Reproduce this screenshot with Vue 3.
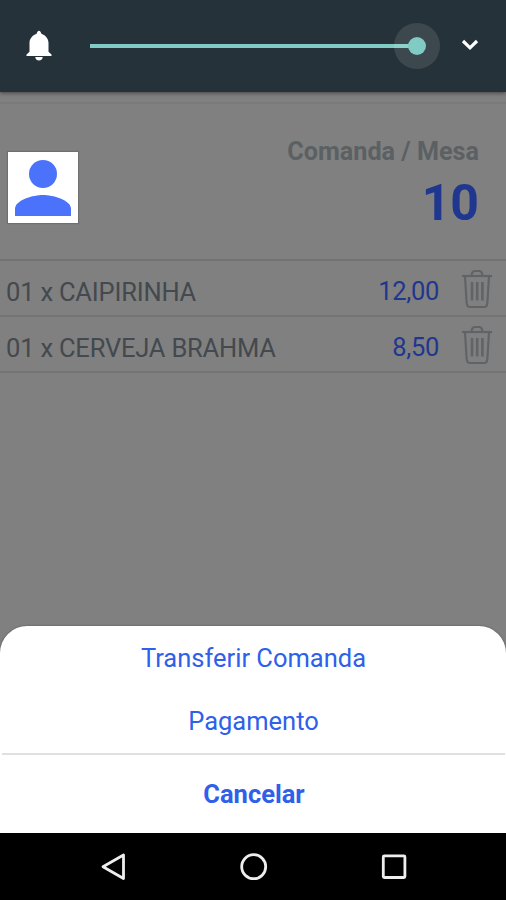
<script setup>
import { ref } from 'vue'

const volume = ref(100)
const comanda = ref('10')

const items = ref([
  { id: 1, qty: '01', name: 'CAIPIRINHA', price: '12,00' },
  { id: 2, qty: '01', name: 'CERVEJA BRAHMA', price: '8,50' }
])

const showSheet = ref(true)
const actions = ['Transferir Comanda', 'Pagamento']

const removeItem = (item) => {
  items.value = items.value.filter(i => i.id !== item.id)
}
</script>

<template>
  <div class="screen">
    <!-- Volume -->
    <div class="volume-panel">
      <svg class="bell" width="28" height="32" viewBox="0 0 28 32">
        <path d="M14 .8c1 0 1.800 1.300 2.400 3C20.800 5.300 23.500 9 23.500 13v8.800l3 2.700V26h-25v-1.500l3-2.700V13c0-4 2.700-7.700 7.100-9.200.6-1.700 1.400-3 2.400-3z" fill="#fff" />
        <path d="M10.300 27h7.400c0 2-1.600 3.500-3.700 3.500s-3.700-1.500-3.700-3.500z" fill="#fff" />
      </svg>
      <div class="slider">
        <div class="track" :style="{ width: volume + '%' }"></div>
        <div class="thumb"></div>
      </div>
      <svg class="chevron" width="18" height="12" viewBox="0 0 18 12">
        <path d="M2 2l7 6.800L16 2" fill="none" stroke="#fff" stroke-width="3.200" />
      </svg>
    </div>

    <!-- Comanda -->
    <div class="content">
      <div class="comanda-header">
        <div class="avatar">
          <svg width="56" height="56" viewBox="0 0 56 56" fill="#4a72fa">
            <circle cx="28" cy="14" r="14" />
            <path d="M0 56v-7c0-9.300 18.600-14 28-14s28 4.700 28 14v7z" />
          </svg>
        </div>
        <div class="comanda-info">
          <div class="label">Comanda / Mesa</div>
          <div class="number">{{ comanda }}</div>
        </div>
      </div>

      <div v-for="item in items" :key="item.id" class="item">
        <div class="name">{{ item.qty }} x {{ item.name }}</div>
        <div class="price">{{ item.price }}</div>
        <button class="trash-btn" @click="removeItem(item)">
          <svg width="32" height="40" viewBox="0 0 32 40" fill="none" stroke="#606467" stroke-width="2.200">
            <path d="M1 7h30" />
            <path d="M10.500 6.500c.3-3 1.500-4.500 3.500-4.500h4c2 0 3.200 1.500 3.500 4.500" />
            <path d="M4 7.500l1.700 27c.2 2.200 1.300 3.500 3.300 3.500h14c2 0 3.100-1.300 3.300-3.500L28 7.500" />
            <path d="M11 13v18.500M16.200 13v18.500M21.400 13v18.500" stroke-width="2.600" />
          </svg>
        </button>
      </div>
    </div>

    <!-- Menu -->
    <div v-if="showSheet" class="sheet">
      <button v-for="action in actions" :key="action" class="sheet-btn" :class="{ first: action === actions[0] }">{{ action }}</button>
      <button class="sheet-btn cancel" @click="showSheet = false">Cancelar</button>
    </div>

    <div class="nav-bar">
      <svg width="28" height="30" viewBox="0 0 28 30">
        <path d="M24.500 3v23.500L4 14.700z" fill="none" stroke="#eee" stroke-width="2.800" stroke-linejoin="round" />
      </svg>
      <svg width="28" height="30" viewBox="0 0 28 30">
        <circle cx="13.700" cy="14.700" r="12" fill="none" stroke="#eee" stroke-width="2.800" />
      </svg>
      <svg width="28" height="30" viewBox="0 0 28 30">
        <rect x="3.300" y="3.900" width="21.600" height="21.600" rx="1" fill="none" stroke="#eee" stroke-width="2.800" />
      </svg>
    </div>
  </div>
</template>

<style>
body {
  margin: 0;
  background: #808080;
}
</style>

<style scoped>
.screen {
  display: flex;
  flex-direction: column;
  width: 506px;
  height: 900px;
  overflow: hidden;
  background: #808080;
  font-family: Roboto, "Liberation Sans", sans-serif;
}

button {
  padding: 0;
  border: none;
  background: none;
  font-family: inherit;
  cursor: pointer;
}

/* Volume */
.volume-panel {
  display: flex;
  align-items: center;
  box-sizing: border-box;
  flex: none;
  height: 92px;
  padding: 0 27px 1px 25px;
  background: #263239;
  box-shadow: 0 1px 4px rgba(0, 0, 0, 0.5);
}

.slider {
  position: relative;
  width: 327px;
  margin-left: 37px;
}

.track {
  height: 4px;
  background: #80cbc4;
}

.thumb {
  position: absolute;
  right: -23px;
  top: -21px;
  box-sizing: border-box;
  width: 46px;
  height: 46px;
  border: 14px solid rgba(255, 255, 255, 0.11);
  border-radius: 50%;
  background: #80cbc4;
  background-clip: padding-box;
}

.chevron {
  margin-left: auto;
  margin-bottom: 2px;
}

/* Comanda */
.content {
  flex: 1;
  padding-top: 10px;
}

.comanda-header {
  display: flex;
  justify-content: space-between;
  box-sizing: border-box;
  height: 159px;
  padding: 0 27px 0 8px;
  border-top: 2px solid #7a7a7a;
  border-bottom: 2px solid #727272;
}

.avatar {
  display: flex;
  align-items: center;
  justify-content: center;
  width: 70px;
  height: 71px;
  margin-top: 48px;
  background: #fff;
  box-shadow: 0 0 1px 1px rgba(0, 0, 0, 0.12);
}

.comanda-info {
  padding-top: 33px;
  text-align: right;
}

.label {
  font-size: 25.2px;
  line-height: 30px;
  font-weight: bold;
  color: #5b6063;
}

.number {
  margin-top: 6px;
  font-size: 50px;
  line-height: 60px;
  font-weight: bold;
  color: #20378f;
}

.item {
  display: flex;
  align-items: center;
  box-sizing: border-box;
  height: 56px;
  padding: 0 13px 0 6px;
  border-bottom: 2px solid #747474;
  font-size: 25.5px;
}

.name {
  flex: 1;
  padding-top: 8px;
  letter-spacing: -0.2px;
  color: #43494e;
}

.price {
  padding-top: 6px;
  letter-spacing: -0.3px;
  color: #20378f;
}

.trash-btn {
  display: flex;
  margin-left: 22px;
  padding-top: 2px;
}

/* Menu */
.sheet {
  display: flex;
  flex-direction: column;
  flex: none;
  height: 207px;
  border-radius: 27px 27px 0 0;
  background: #fff;
  box-shadow: 0 0 2px rgba(0, 0, 0, 0.4);
}

.sheet-btn {
  height: 64px;
  padding-left: 1px;
  font-size: 25.5px;
  color: #2f60ea;
}

.sheet-btn.first {
  height: 63px;
}

.sheet-btn.cancel {
  height: 80px;
  margin: 0 1px 0 2px;
  border-top: 2px solid #e0e0e0;
  font-weight: bold;
}

/* Nav */
.nav-bar {
  display: flex;
  align-items: center;
  justify-content: space-between;
  box-sizing: border-box;
  flex: none;
  height: 67px;
  padding: 0 98px 0 99px;
  background: #000;
}
</style>
